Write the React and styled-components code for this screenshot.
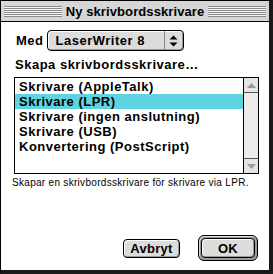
import styled, { createGlobalStyle } from 'styled-components';

const GlobalStyle = createGlobalStyle`
    html, body {
        margin: 0;
        padding: 0;
        background: #ffffff;
    }
    * {
        box-sizing: border-box;
    }
`;

const Window = styled.div`
    width: 273px;
    height: 274px;
    display: flex;
    flex-direction: column;
    background: #ffffff;
    border-left: 1px solid #000;
    border-top: 1px solid #000;
    border-right: 4px solid #1a1a1a;
    border-bottom: 4px solid #1a1a1a;
    font-family: 'Liberation Sans', Arial, sans-serif;
`;

const TitleBar = styled.div`
    height: 21px;
    display: flex;
    align-items: center;
    padding: 0 3px;
    background: #d6d6d6;
    border-bottom: 1px solid #000;
`;

const Stripes = styled.div`
    flex: 1;
    height: 11px;
    background: repeating-linear-gradient(
        to bottom,
        #8a8a8a 0px,
        #8a8a8a 1px,
        #f4f4f4 1px,
        #f4f4f4 2px
    );
`;

const Title = styled.div`
    padding: 0 4px;
    font-size: 13px;
    font-weight: bold;
    color: #000;
    letter-spacing: 0.1px;
`;

const Content = styled.div`
    flex: 1;
    display: flex;
    flex-direction: column;
    padding: 8px 11px 9px 13px;
`;

const MedRow = styled.div`
    display: flex;
    align-items: center;
    gap: 3px;
    padding-left: 2px;
`;

const BoldText = styled.span`
    font-size: 13px;
    font-weight: bold;
    letter-spacing: 0.5px;
    color: #000;
`;

const Popup = styled.div`
    width: 137px;
    height: 21px;
    display: flex;
    border: 1px solid #000;
    border-radius: 4px;
    background: #dcdcdc;
    box-shadow: inset 1px 1px 0 #fff, inset -1px -1px 0 #999;
    overflow: hidden;
`;

const PopupText = styled(BoldText)`
    flex: 1;
    display: flex;
    align-items: center;
    padding-left: 8px;
`;

const PopupArrows = styled.div`
    width: 19px;
    display: flex;
    align-items: center;
    justify-content: center;
    border-left: 1px solid #888;
`;

const Caption = styled(BoldText)`
    display: block;
    margin-top: 6px;
    padding-left: 1px;
`;

const ListBox = styled.div`
    margin-top: 5px;
    width: 245px;
    height: 97px;
    display: flex;
    border: 1px solid #000;
`;

const Items = styled.div`
    flex: 1;
    padding-top: 1px;
`;

const Item = styled(BoldText)`
    display: block;
    height: 15px;
    line-height: 15px;
    padding-left: 4px;
    background: ${(p) => (p.$selected ? '#5fd3e0' : 'transparent')};
`;

const ScrollBar = styled.div`
    width: 15px;
    display: flex;
    flex-direction: column;
    justify-content: space-between;
    border-left: 1px solid #000;
    background: #ececec;
`;

const ScrollArrow = styled.div`
    height: 15px;
    display: flex;
    align-items: center;
    justify-content: center;
    border-${(p) => (p.$down ? 'top' : 'bottom')}: 1px solid #555;
    background: #e4e4e4;
`;

const Description = styled.div`
    margin-top: 3px;
    margin-left: -2px;
    font-size: 10px;
    color: #000;
    letter-spacing: 0.3px;
    white-space: nowrap;
`;

const Buttons = styled.div`
    margin-top: auto;
    display: flex;
    justify-content: flex-end;
    align-items: center;
    gap: 18px;
`;

const Button = styled.button`
    width: ${(p) => (p.$default ? '54px' : '57px')};
    height: ${(p) => (p.$default ? '20px' : '19px')};
    padding: 0;
    border: 1px solid #000;
    border-radius: 4px;
    background: #dcdcdc;
    box-shadow: inset 1px 1px 0 #fff, inset -1px -1px 0 #999;
    font-family: 'Liberation Sans', Arial, sans-serif;
    font-size: 13px;
    font-weight: bold;
    letter-spacing: 0.3px;
    color: #000;
`;

const DefaultRing = styled.div`
    padding: 2px;
    border: 1px solid #000;
    border-radius: 6px;
    background: #9a9a9a;
    box-shadow: inset 1px 1px 0 #dcdcdc;
`;

function UpDown() {
    return (
        <svg width="9" height="12" viewBox="0 0 9 12">
            <path d="M4.5 0.5 L8.5 4.5 L0.5 4.5 Z" fill="#000" />
            <path d="M4.5 11.5 L8.5 7.5 L0.5 7.5 Z" fill="#000" />
        </svg>
    );
}

function Tri({ down }) {
    return (
        <svg width="9" height="5" viewBox="0 0 9 5">
            <path d={down ? 'M0 0 L9 0 L4.5 5 Z' : 'M4.5 0 L9 5 L0 5 Z'} fill="#9a9a9a" />
        </svg>
    );
}

const printers = [
    'Skrivare (AppleTalk)',
    'Skrivare (LPR)',
    'Skrivare (ingen anslutning)',
    'Skrivare (USB)',
    'Konvertering (PostScript)',
];

function App() {
    return (
        <>
            <GlobalStyle />
            <Window>
                <TitleBar>
                    <Stripes />
                    <Title>Ny skrivbordsskrivare</Title>
                    <Stripes />
                </TitleBar>
                <Content>
                    <MedRow>
                        <BoldText>Med</BoldText>
                        <Popup>
                            <PopupText>LaserWriter 8</PopupText>
                            <PopupArrows>
                                <UpDown />
                            </PopupArrows>
                        </Popup>
                    </MedRow>
                    <Caption>Skapa skrivbordsskrivare…</Caption>
                    <ListBox>
                        <Items>
                            {printers.map((p) => (
                                <Item key={p} $selected={p === 'Skrivare (LPR)'}>
                                    {p}
                                </Item>
                            ))}
                        </Items>
                        <ScrollBar>
                            <ScrollArrow>
                                <Tri />
                            </ScrollArrow>
                            <ScrollArrow $down>
                                <Tri down />
                            </ScrollArrow>
                        </ScrollBar>
                    </ListBox>
                    <Description>Skapar en skrivbordsskrivare för skrivare via LPR.</Description>
                    <Buttons>
                        <Button>Avbryt</Button>
                        <DefaultRing>
                            <Button $default>OK</Button>
                        </DefaultRing>
                    </Buttons>
                </Content>
            </Window>
        </>
    );
}

export default App;
